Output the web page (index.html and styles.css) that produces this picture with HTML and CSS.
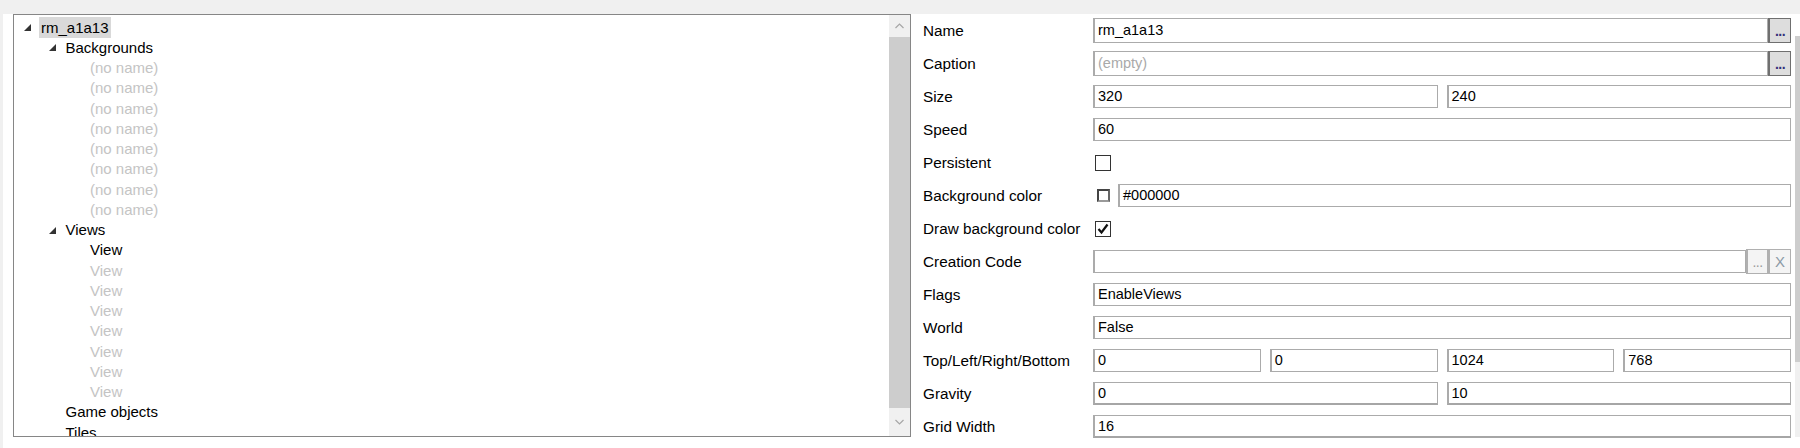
FILE: index.html
```html
<!DOCTYPE html>
<html>
<head>
<meta charset="utf-8">
<link rel="stylesheet" href="styles.css">
</head>
<body>
<div class="topbar"></div>
<div class="main">
  <div class="tree-pane">
    <div class="tree">
      <div class="row lv0"><span class="exp"><svg width="7" height="7" viewBox="0 0 7 7"><polygon points="7,0 7,7 0,7"/></svg></span><span class="lbl sel">rm_a1a13</span></div>
      <div class="row lv1"><span class="exp"><svg width="7" height="7" viewBox="0 0 7 7"><polygon points="7,0 7,7 0,7"/></svg></span><span class="lbl">Backgrounds</span></div>
      <div class="row lv2"><span class="exp"></span><span class="lbl dim">(no name)</span></div>
      <div class="row lv2"><span class="exp"></span><span class="lbl dim">(no name)</span></div>
      <div class="row lv2"><span class="exp"></span><span class="lbl dim">(no name)</span></div>
      <div class="row lv2"><span class="exp"></span><span class="lbl dim">(no name)</span></div>
      <div class="row lv2"><span class="exp"></span><span class="lbl dim">(no name)</span></div>
      <div class="row lv2"><span class="exp"></span><span class="lbl dim">(no name)</span></div>
      <div class="row lv2"><span class="exp"></span><span class="lbl dim">(no name)</span></div>
      <div class="row lv2"><span class="exp"></span><span class="lbl dim">(no name)</span></div>
      <div class="row lv1"><span class="exp"><svg width="7" height="7" viewBox="0 0 7 7"><polygon points="7,0 7,7 0,7"/></svg></span><span class="lbl">Views</span></div>
      <div class="row lv2"><span class="exp"></span><span class="lbl">View</span></div>
      <div class="row lv2"><span class="exp"></span><span class="lbl dim">View</span></div>
      <div class="row lv2"><span class="exp"></span><span class="lbl dim">View</span></div>
      <div class="row lv2"><span class="exp"></span><span class="lbl dim">View</span></div>
      <div class="row lv2"><span class="exp"></span><span class="lbl dim">View</span></div>
      <div class="row lv2"><span class="exp"></span><span class="lbl dim">View</span></div>
      <div class="row lv2"><span class="exp"></span><span class="lbl dim">View</span></div>
      <div class="row lv2"><span class="exp"></span><span class="lbl dim">View</span></div>
      <div class="row lv1"><span class="exp"></span><span class="lbl">Game objects</span></div>
      <div class="row lv1"><span class="exp"></span><span class="lbl">Tiles</span></div>
    </div>
    <div class="vscroll">
      <div class="arrow up"><svg width="9" height="6" viewBox="0 0 9 6"><polyline points="0.5,5 4.5,1 8.5,5" fill="none" stroke="#a6a6a6" stroke-width="1.2"/></svg></div>
      <div class="thumb"></div>
      <div class="arrow down"><svg width="9" height="6" viewBox="0 0 9 6"><polyline points="0.5,1 4.5,5 8.5,1" fill="none" stroke="#a6a6a6" stroke-width="1.2"/></svg></div>
    </div>
  </div>
  <div class="props">
    <div class="grid">
      <div class="prow"><div class="plabel">Name</div><div class="pval"><div class="box tall">rm_a1a13</div><div class="btn dark">...</div></div></div>
      <div class="prow"><div class="plabel">Caption</div><div class="pval"><div class="box tall empty">(empty)</div><div class="btn dark">...</div></div></div>
      <div class="prow"><div class="plabel">Size</div><div class="pval split"><div class="box">320</div><div class="box">240</div></div></div>
      <div class="prow"><div class="plabel">Speed</div><div class="pval"><div class="box">60</div></div></div>
      <div class="prow"><div class="plabel">Persistent</div><div class="pval"><div class="check"></div></div></div>
      <div class="prow"><div class="plabel">Background color</div><div class="pval"><div class="swatch"></div><div class="box">#000000</div></div></div>
      <div class="prow"><div class="plabel">Draw background color</div><div class="pval"><div class="check"><svg width="14" height="14" viewBox="0 0 14 14"><polyline points="2.5,7 5.5,10.5 11.5,2.5" fill="none" stroke="#111111" stroke-width="2.2"/></svg></div></div></div>
      <div class="prow"><div class="plabel">Creation Code</div><div class="pval"><div class="box"></div><div class="btn light">...</div><div class="btn light x">X</div></div></div>
      <div class="prow"><div class="plabel">Flags</div><div class="pval"><div class="box">EnableViews</div></div></div>
      <div class="prow"><div class="plabel">World</div><div class="pval"><div class="box">False</div></div></div>
      <div class="prow"><div class="plabel">Top/Left/Right/Bottom</div><div class="pval split"><div class="box">0</div><div class="box">0</div><div class="box">1024</div><div class="box">768</div></div></div>
      <div class="prow"><div class="plabel">Gravity</div><div class="pval split"><div class="box thick">0</div><div class="box thick">10</div></div></div>
      <div class="prow"><div class="plabel">Grid Width</div><div class="pval"><div class="box thick">16</div></div></div>
    </div>
    <div class="rscroll"><div class="rthumb"></div></div>
  </div>
</div>
</body>
</html>
```
FILE: styles.css
```css
html, body {
  margin: 0;
  padding: 0;
  background: #ffffff;
  font-family: "Liberation Sans", Arial, sans-serif;
  font-size: 15px;
  color: #000;
  width: 1800px;
  height: 448px;
  overflow: hidden;
}

.topbar {
  height: 14px;
  background: #f0f0f0;
}

.main {
  display: flex;
  height: 434px;
  border-left: 3px solid #f0f0f0;
}

.tree-pane {
  margin-left: 10px;
  width: 898px;
  height: 423px;
  box-sizing: border-box;
  border: 1px solid #868686;
  display: flex;
  flex: none;
}

.tree {
  flex: 1;
  overflow: hidden;
  padding-top: 2px;
}

.row {
  height: 20.25px;
  display: flex;
  align-items: center;
  white-space: nowrap;
}

.lv0 { padding-left: 10px; }
.lv1 { padding-left: 34.5px; }
.lv2 { padding-left: 59px; }

.exp {
  width: 7px;
  height: 7px;
  display: flex;
  margin-top: 1px;
}

.exp svg polygon { fill: #333333; }

.lbl {
  margin-left: 8px;
  padding: 0 2px;
  line-height: 21px;
}

.lbl.sel { background: #d9d9d9; }

.lbl.dim { color: #c4c4c4; }

.vscroll {
  width: 21px;
  display: flex;
  flex-direction: column;
  background: #f0f0f0;
}

.arrow {
  display: flex;
  align-items: center;
  justify-content: center;
}

.arrow.up { height: 22px; }
.arrow.down { height: 28px; }

.thumb {
  flex: 1;
  background: #cdcdcd;
}

.props {
  flex: 1;
  display: flex;
  min-width: 0;
}

.grid {
  flex: 1;
  padding-left: 12px;
  padding-right: 4px;
}

.prow {
  height: 33px;
  display: grid;
  grid-template-columns: 170px 1fr;
  align-items: center;
}

.plabel {
  white-space: nowrap;
  font-size: 15.3px;
}

.pval {
  display: flex;
  align-items: center;
  min-width: 0;
}

.pval.split { gap: 9px; }
.pval.split .box { flex: 1; }

.box {
  flex: 1;
  height: 23px;
  box-sizing: border-box;
  border: 1px solid #ababab;
  border-left-width: 2px;
  padding-left: 3px;
  font-size: 14.5px;
  line-height: 21px;
  white-space: nowrap;
  overflow: hidden;
}

.box.tall { height: 25px; line-height: 23px; }
.box.empty { color: #a9a9a9; }
.box.thick { border-bottom: 2px solid #a6a6a6; }

.btn {
  width: 23px;
  height: 25px;
  box-sizing: border-box;
  display: flex;
  align-items: flex-end;
  justify-content: center;
  font-size: 14px;
  line-height: 14px;
  letter-spacing: -0.5px;
}

.btn.dark {
  background: #dddddd;
  border: 1px solid #6f6f6f;
  border-left-width: 2px;
  color: #34307a;
  font-weight: bold;
  padding-bottom: 4px;
}

.btn.light {
  width: 22px;
  height: 25px;
  background: #f4f4f4;
  border: 1px solid #b0b0b0;
  border-left-width: 2px;
  color: #9a9a9a;
  padding-bottom: 4px;
}

.btn.light.x {
  width: 23px;
  font-size: 15px;
  letter-spacing: 0;
  align-items: center;
  padding-bottom: 0;
  color: #8c9aa6;
}

.check {
  width: 16px;
  height: 16px;
  box-sizing: border-box;
  border: 1px solid #333333;
  margin-left: 2px;
  display: flex;
  align-items: center;
  justify-content: center;
}

.swatch {
  width: 13px;
  height: 13px;
  box-sizing: border-box;
  border: 2px solid #444444;
  border-bottom-color: #9a9a9a;
  border-right-color: #666666;
  margin-left: 4px;
  margin-right: 8px;
  flex: none;
}

.rscroll {
  width: 5px;
  height: 423px;
  display: flex;
  flex-direction: column;
  background: #f0f0f0;
}

.rscroll::before {
  content: "";
  height: 22px;
  background: #ffffff;
}

.rthumb {
  height: 326px;
  background: #cdcdcd;
}
```
